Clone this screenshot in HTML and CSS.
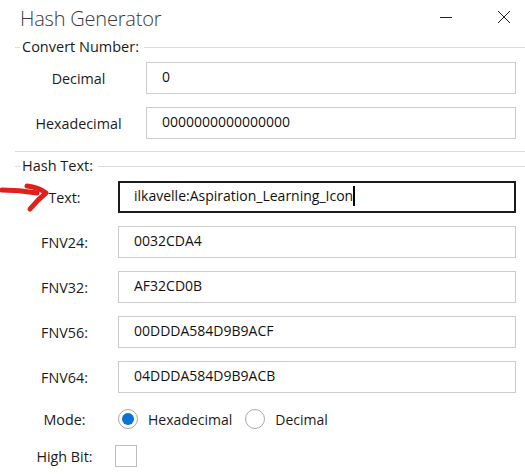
FILE: index.html
```html
<!DOCTYPE html>
<html>
<head>
<meta charset="utf-8">
<link rel="stylesheet" href="styles.css">
</head>
<body>
<div class="window">
  <div class="titlebar">
    <div class="title">Hash Generator</div>
    <div class="controls">
      <svg class="ctl" width="14" height="14" viewBox="0 0 14 14"><line x1="1" y1="7.5" x2="13" y2="7.5" stroke="#222" stroke-width="1"/></svg>
      <svg class="ctl close" width="14" height="14" viewBox="0 0 14 14"><path d="M1 1 L13 13 M13 1 L1 13" stroke="#222" stroke-width="1" fill="none"/></svg>
    </div>
  </div>

  <div class="legend"><span class="lead"></span><span class="ltext">Convert Number:</span><span class="rule"></span></div>
  <div class="grid upper">
    <div class="label">Decimal</div>
    <div class="box">0</div>
    <div class="label">Hexadecimal</div>
    <div class="box">0000000000000000</div>
  </div>
  <div class="sep"></div>

  <div class="legend"><span class="lead"></span><span class="ltext">Hash Text:</span><span class="rule"></span></div>
  <div class="grid lower">
    <div class="label">Text:</div>
    <div class="box focus">ilkavelle:Aspiration_Learning_Icon<span class="caret"></span></div>
    <div class="label">FNV24:</div>
    <div class="box">0032CDA4</div>
    <div class="label">FNV32:</div>
    <div class="box">AF32CD0B</div>
    <div class="label">FNV56:</div>
    <div class="box">00DDDA584D9B9ACF</div>
    <div class="label">FNV64:</div>
    <div class="box">04DDDA584D9B9ACB</div>
    <div class="label mode-label">Mode:</div>
    <div class="radios">
      <span class="radio on"><span class="dot"></span></span><span class="rtext">Hexadecimal</span>
      <span class="radio"></span><span class="rtext">Decimal</span>
    </div>
    <div class="label check-label">High Bit:</div>
    <div class="checkrow"><span class="check"></span></div>
  </div>

  <svg class="arrow" width="52" height="34" viewBox="0 0 52 34">
    <path d="M2 8 C 14 8, 25 9, 37 11" stroke="#e0201b" stroke-width="5" fill="none" stroke-linecap="round"/>
    <path d="M27 4 C 36 5, 42 8, 46 11 C 41 15, 35 21, 30 27" stroke="#e0201b" stroke-width="5" fill="none" stroke-linecap="round" stroke-linejoin="round"/>
  </svg>
</div>
</body>
</html>
```

FILE: styles.css
```css
html, body {
  margin: 0;
  padding: 0;
  background: #ffffff;
}
body {
  font-family: "Open Sans", "Noto Sans", "Liberation Sans", sans-serif;
  color: #1b1b1b;
  font-size: 14px;
}
.window {
  position: relative;
  width: 525px;
  height: 476px;
  overflow: hidden;
}
.titlebar {
  height: 37px;
  display: flex;
  align-items: center;
  justify-content: space-between;
}
.title {
  padding-left: 20px;
  font-size: 20px;
  font-weight: 300;
  color: #3a3a3a;
  line-height: 36px;
  letter-spacing: -0.2px;
}
.controls {
  display: flex;
  align-items: center;
  gap: 44px;
  padding-right: 14px;
  margin-top: -4px;
}
.legend {
  height: 20px;
  display: flex;
  align-items: center;
  padding-left: 15px;
}
.lead {
  width: 5px;
  height: 1px;
  background: #dcdcdc;
}
.ltext {
  padding: 0 5px 0 2px;
  font-size: 14.5px;
  line-height: 20px;
  color: #1b1b1b;
}
.rule {
  flex: 1;
  height: 1px;
  background: #dcdcdc;
}
.grid {
  display: grid;
  row-gap: 13px;
  padding: 5px 9px 0 11px;
  align-items: center;
}
.upper {
  grid-template-columns: 135px 1fr;
}
.lower {
  grid-template-columns: 107px 1fr;
}
.label {
  text-align: center;
  font-size: 14.3px;
  color: #1b1b1b;
}
.box {
  height: 32px;
  box-sizing: border-box;
  border: 1px solid #cccccc;
  padding-left: 15px;
  display: flex;
  align-items: center;
  font-size: 14px;
  color: #111;
  padding-bottom: 3px;
}
.box.focus {
  border: 2px solid #1a1a1a;
  padding-left: 14px;
}
.caret {
  display: inline-block;
  width: 2px;
  height: 20px;
  background: #000;
  margin-left: 0;
}
.sep {
  height: 1px;
  background: #dcdcdc;
  margin: 12px 0 4px 15px;
}
.radios {
  height: 26px;
  display: flex;
  align-items: center;
}
.radio {
  width: 20px;
  height: 20px;
  box-sizing: border-box;
  border: 1px solid #a8a8a8;
  border-radius: 50%;
  display: flex;
  align-items: center;
  justify-content: center;
}
.dot {
  width: 12px;
  height: 12px;
  border-radius: 50%;
  background: #0a73d6;
}
.rtext {
  font-size: 14px;
  margin-left: 10px;
  margin-right: 13px;
}
.checkrow {
  height: 22px;
  display: flex;
  align-items: center;
}
.check {
  width: 22px;
  height: 22px;
  box-sizing: border-box;
  border: 1px solid #bdbdbd;
  margin-left: -3px;
}
.arrow {
  position: absolute;
  left: 0;
  top: 182px;
}
```
